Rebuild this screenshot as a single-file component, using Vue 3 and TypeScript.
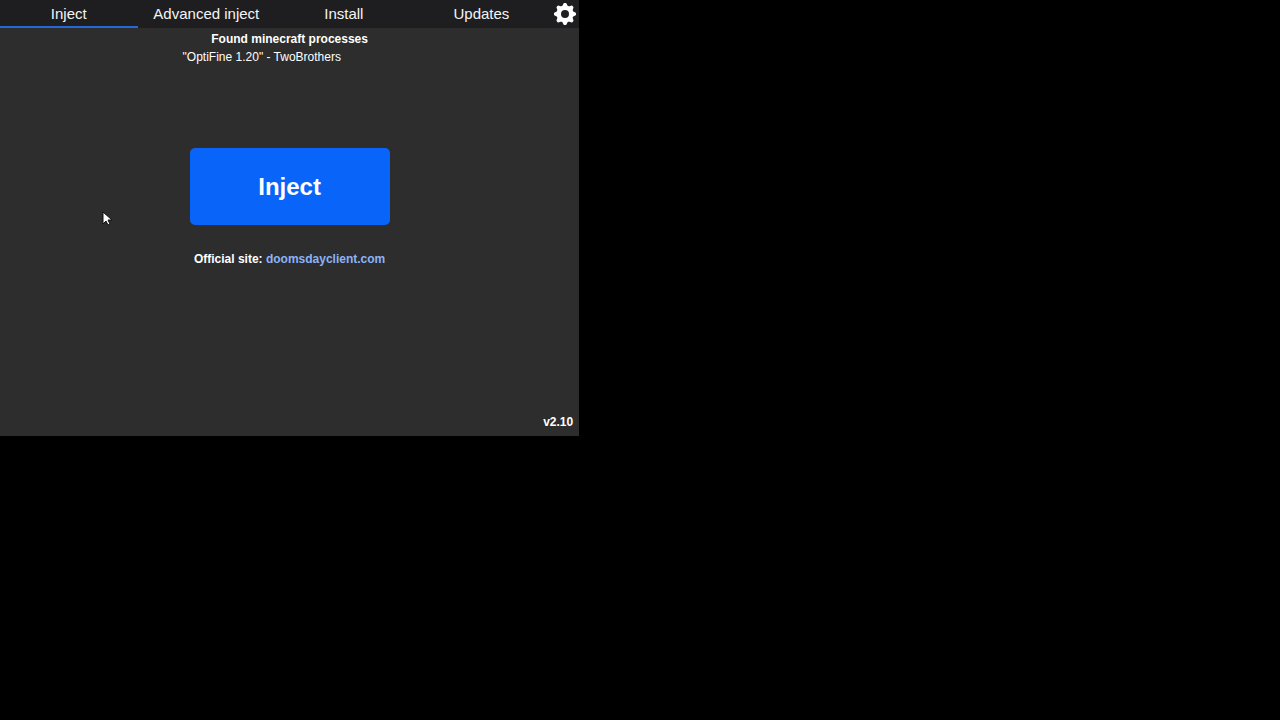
<script setup lang="ts">
import { ref } from 'vue'

const tabs: string[] = ['Inject', 'Advanced inject', 'Install', 'Updates']
const activeTab = ref<string>('Inject')
const processes: string[] = ['"OptiFine 1.20" - TwoBrothers']
const toothAngles: number[] = [0, 45, 90, 135, 180, 225, 270, 315]
</script>

<template>
  <div class="desktop">
    <div class="window">
      <nav class="tabs">
        <button
          v-for="tab in tabs"
          :key="tab"
          type="button"
          class="tab"
          :class="{ active: tab === activeTab }"
          @click="activeTab = tab"
        >{{ tab }}</button>
        <button type="button" class="settings" aria-label="Settings">
          <svg viewBox="-11 -11 22 22" aria-hidden="true">
            <circle r="6.2" fill="none" stroke="currentColor" stroke-width="4.4" />
            <path
              v-for="angle in toothAngles"
              :key="angle"
              :transform="`rotate(${angle})`"
              d="M-3.2-7 -1.6-10.2Q-1.4-11-.6-11H.6Q1.4-11 1.6-10.2L3.2-7z"
              fill="currentColor"
            />
          </svg>
        </button>
      </nav>
      <main class="content">
        <h1 class="title">Found minecraft processes</h1>
        <ul class="processes">
          <li v-for="item in processes" :key="item">{{ item }}</li>
        </ul>
        <button type="button" class="inject">Inject</button>
        <p class="site">Official site: <a href="https://doomsdayclient.com">doomsdayclient.com</a></p>
      </main>
      <footer class="version">v2.10</footer>
    </div>
    <svg class="cursor" viewBox="0 0 12 18" aria-hidden="true">
      <path d="M2 2v12l3-3 2 4 2-1-2-4h4z" fill="#fff" stroke="#111" stroke-width="1" />
    </svg>
  </div>
</template>

<style>
body {
  margin: 0;
  background: #000;
}
</style>

<style scoped>
.desktop {
  position: relative;
  min-height: 100vh;
  background: #000;
  color: #fff;
  font-family: "Liberation Sans", Arial, sans-serif;
  font-size: 12px;
  line-height: 18px;
}
.window {
  display: flex;
  flex-direction: column;
  box-sizing: border-box;
  width: 45.25%;
  min-height: 60.5vh;
  background: #2d2d2d;
}
.tabs {
  display: flex;
  height: 28px;
  background: #1e1e20;
}
button {
  margin: 0;
  padding: 0;
  border: 0;
  color: inherit;
  font-family: inherit;
  cursor: pointer;
}
.tab {
  flex: 1 1 0;
  background: none;
  border-top: 2px solid transparent;
  border-bottom: 2px solid transparent;
  color: #f4f4f4;
  font-size: 15px;
  line-height: 24px;
  white-space: nowrap;
}
.tab.active {
  border-bottom-color: #2468d8;
}
.settings {
  display: flex;
  align-items: center;
  justify-content: center;
  width: 29px;
  padding-left: 1px;
  box-sizing: border-box;
  background: none;
}
.settings svg {
  width: 22px;
  height: 22px;
}
.content {
  display: flex;
  flex: 1;
  flex-direction: column;
  align-items: center;
  padding-top: 2px;
}
.title {
  margin: 0;
  font-size: 12px;
  font-weight: bold;
}
.processes {
  width: 214px;
  min-height: 100px;
  margin: 0;
  padding: 0;
  list-style: none;
}
.inject {
  width: 200px;
  height: 77px;
  border-radius: 5px;
  background: #0964fa;
  font-size: 24px;
  font-weight: bold;
}
.site {
  margin: 25px 0 0;
  font-weight: bold;
}
.site a {
  color: #8ab4f8;
  text-decoration: none;
}
.version {
  padding: 0 6px 5px;
  font-weight: bold;
  text-align: right;
}
.cursor {
  position: absolute;
  top: 210px;
  left: 101px;
  width: 12px;
  height: 18px;
}
</style>
